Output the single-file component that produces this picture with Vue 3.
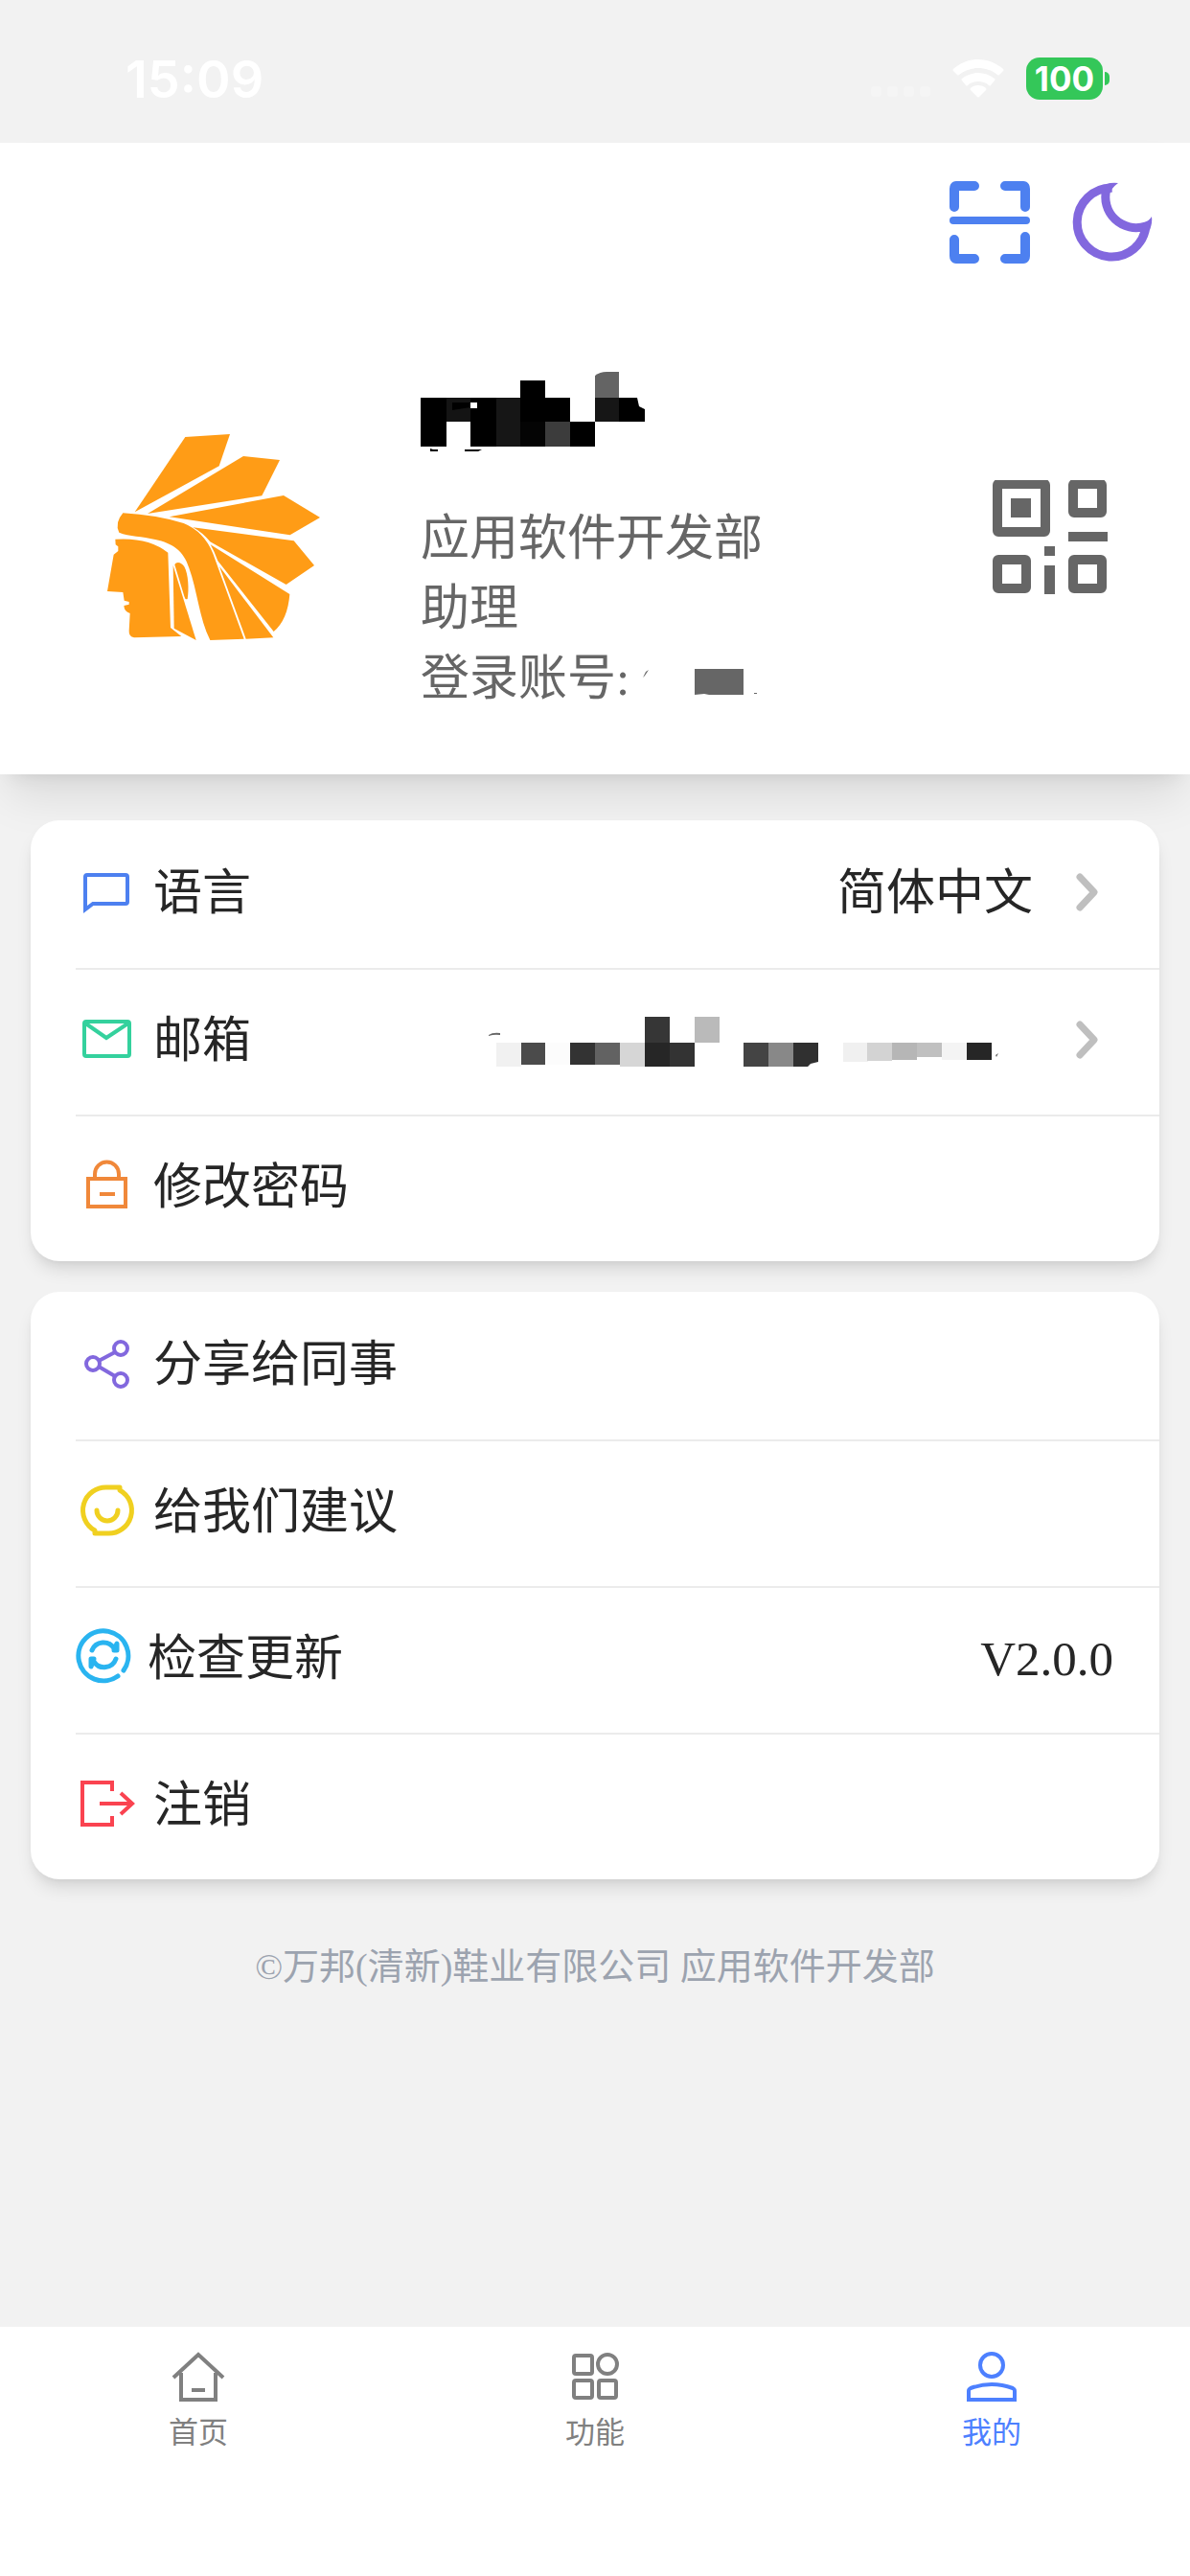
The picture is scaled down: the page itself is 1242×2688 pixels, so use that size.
<template>
  <div class="page">
    <div class="status-bar">
      <span class="time">{{ time }}</span>
      <div class="status-icons">
        <svg class="signal" viewBox="0 0 62 12" aria-hidden="true">
          <rect v-for="n in 4" :key="n" :x="(n - 1) * 17" y="0" width="11" height="11" rx="4" />
        </svg>
        <svg class="wifi" viewBox="0 0 54 40" aria-hidden="true">
          <path d="M27 0C37 0 46 4 53 10q1 1 0 2l-4 4q-1 1-2 0C41 11 34 9 27 9S13 11 7 16q-1 1-2 0l-4-4q-1-1 0-2C8 4 17 0 27 0Z" />
          <path d="M27 14c6 0 12 2 17 6q1 1 0 2l-4 5q-1 1-2 0c-3-3-7-4-11-4s-8 1-11 4q-1 1-2 0l-4-5q-1-1 0-2c5-4 11-6 17-6Z" />
          <path d="M27 27c3 0 6 1 8 3q1 1 0 2l-7 7q-1 1-2 0l-7-7q-1-1 0-2c2-2 5-3 8-3Z" />
        </svg>
        <div class="battery">
          <span class="battery-level">100</span>
          <span class="battery-cap"></span>
        </div>
      </div>
    </div>

    <header class="header">
      <div class="toolbar">
        <button class="icon-button" aria-label="扫一扫">
          <svg class="scan" viewBox="0 0 86 86">
            <path d="M27 5H8Q6 5 6 8V27M59 5H78Q80 5 80 8V27M6 61V78Q6 81 8 81H27M80 58V78Q80 81 78 81H59" />
            <path class="scan-line" d="M5 41H81" />
          </svg>
        </button>
        <button class="icon-button" aria-label="深色模式">
          <svg class="moon" viewBox="0 0 84 86">
            <path d="M41 7A36 36 0 1 0 77 47A32 32 0 0 1 36 8Z" />
            <path class="moon-tips" d="M36 3Q42 1 48 2Q41 7 38 15L33 12ZM74 44Q80 42 83 37Q84 43 81 51L73 54Z" />
          </svg>
        </button>
      </div>

      <div class="profile">
        <svg class="avatar" viewBox="0 16 840 840" role="img" aria-label="头像">
          <path d="M340 106L480 97L446 197L182 341Z" />
          <path d="M522 166L636 178L580 290L222 346Z" />
          <path d="M290 356L648 289L762 358L668 413Z" />
          <path d="M364 389L680 431L744 508L656 568L418 434Q393 404 364 389Z" />
          <path d="M419 443L667 598Q661 678 617 715L442 494Q432 466 419 443Z" />
          <path d="M447 511L616 734L530 738Z" />
          <path d="M145 344Q250 350 335 376Q399 402 427 471L524 738L418 742C384 674 377 583 352 516C335 462 300 438 246 427C205 416 165 418 133 405Q118 375 145 344Z" />
          <path d="M121 426Q225 419 286 468L294 703L328 730L180 734Q163 731 164 713L167 658Q149 653 148 634L164 630V622L149 618L145 592L96 589L116 474L130 463V449L122 443Z" />
          <path d="M302 508L374 742L305 705Z" />
          <path d="M307 506C312 494 329 498 337 512C350 536 352 584 347 613Q340 617 337 605Z" />
        </svg>

        <div class="profile-info">
          <svg class="masked-name" viewBox="0 0 240 85" aria-hidden="true">
            <path fill="#646464" d="M182 5Q187 1 194 1H207V28H182Z" />
            <rect v-for="(c, i) in nameCells" :key="i" :x="c[0]" :y="c[1]" :width="c[2]" :height="c[3]" :fill="c[4]" />
            <path fill="#000" d="M207 28H226L228 37L234 40V53H207ZM10 81L13 82H18V84H10ZM46 82H64L60 84H46Z" />
            <path fill="#000" d="M33 33H52V38L33 41Z" />
            <path fill="#fff" d="M52 33H59V39H52Z" />
          </svg>
          <p>{{ user.department }}</p>
          <p>{{ user.position }}</p>
          <p class="account">
            登录账号:
            <svg class="masked-account" viewBox="0 0 122 51" aria-hidden="true">
              <path d="M55 15H106V42H70L65 41L55 42ZM1 24L4 18L7 16L3 22ZM117 40H120V41H117Z" />
            </svg>
          </p>
        </div>

        <button class="icon-button" aria-label="我的二维码">
          <svg class="qr" viewBox="0 1 120 130">
            <rect x="5" y="5" width="50" height="50" rx="1" />
            <rect x="84" y="5" width="30" height="30" rx="1" />
            <rect x="5" y="84" width="30" height="30" rx="1" />
            <rect x="84" y="84" width="30" height="30" rx="1" />
            <path d="M19 20H40V40H19ZM79 55H120V65H79ZM54 70H65V80H54ZM54 90H65V120H54Z" />
          </svg>
        </button>
      </div>
    </header>

    <main class="content">
      <ul v-for="(group, g) in groups" :key="g" class="card">
        <li v-for="item in group" :key="item.key" class="row">
          <button class="row-button">
            <svg class="row-icon" :class="item.key" viewBox="0 0 64 64" aria-hidden="true">
              <path v-for="(d, i) in item.paths" :key="i" :d="d" />
            </svg>
            <span class="row-label">{{ item.label }}</span>
            <svg v-if="item.masked" class="masked-email" viewBox="0 0 568 54" aria-hidden="true">
              <rect v-for="(c, i) in emailCells" :key="i" :x="c[0]" y="29" width="26" :height="c[1]" :fill="c[2]" />
              <path fill="#363636" d="M163 2H189V29H163Z" />
              <path fill="#bababa" d="M215 2H241V29H215Z" />
              <path fill="#303030" d="M318 29H344V49L336 51L333 54H318Z" />
              <path fill="#666" d="M0 21Q4 18 12 19V21Q6 20 0 22ZM529 42L532 40L530 44Z" />
            </svg>
            <span v-else-if="item.value" class="row-value">{{ item.value }}</span>
            <svg v-if="item.arrow" class="arrow" viewBox="0 0 68 51" aria-hidden="true">
              <path d="M33 8L48 24L33 40" />
            </svg>
          </button>
        </li>
      </ul>
      <p class="copyright">©万邦(清新)鞋业有限公司 应用软件开发部</p>
    </main>

    <nav class="tab-bar">
      <a
        v-for="tab in tabs"
        :key="tab.key"
        :href="'#' + tab.key"
        class="tab"
        :class="{ active: tab.key === activeTab }"
        @click.prevent="activeTab = tab.key"
      >
        <svg class="tab-icon" viewBox="0 0 64 64" aria-hidden="true">
          <path v-for="(d, i) in tab.paths" :key="i" :d="d" />
        </svg>
        <span>{{ tab.label }}</span>
      </a>
    </nav>
  </div>
</template>

<script setup>
import { ref } from 'vue'

const time = '15:09'
const activeTab = ref('mine')

const user = {
  department: '应用软件开发部',
  position: '助理'
}

// mosaic over the user name: x, y, width, height, fill
const nameCells = [
  [0, 28, 27, 51, '#000'],
  [27, 28, 25, 25, '#141414'],
  [52, 28, 27, 51, '#000'],
  [79, 28, 25, 51, '#161616'],
  [104, 10, 26, 43, '#000'],
  [104, 53, 26, 26, '#040404'],
  [130, 28, 26, 25, '#000'],
  [130, 53, 26, 26, '#3c3c3c'],
  [156, 53, 26, 26, '#000'],
  [182, 28, 25, 25, '#161616']
]

// mosaic over the e-mail address: x, height, fill
const emailCells = [
  [8, 25, '#f1f1f1'],
  [34, 23, '#4b4b4b'],
  [59, 23, '#fcfcfc'],
  [85, 23, '#333'],
  [111, 23, '#626262'],
  [137, 25, '#d6d6d6'],
  [163, 25, '#262626'],
  [189, 25, '#333'],
  [266, 25, '#444'],
  [292, 25, '#888'],
  [370, 20, '#f0f0f0'],
  [395, 19, '#d3d3d3'],
  [421, 18, '#b6b6b6'],
  [447, 15, '#c0c0c0'],
  [473, 18, '#f4f4f4'],
  [499, 18, '#262626']
]

const groups = [
  [
    {
      key: 'language',
      label: '语言',
      value: '简体中文',
      arrow: true,
      paths: ['M10 49V15Q10 13 12 13H52Q54 13 54 15V41Q54 43 52 43H18Z']
    },
    {
      key: 'email',
      label: '邮箱',
      masked: true,
      arrow: true,
      paths: [
        'M11 12H54Q56 12 56 14V46Q56 48 54 48H11Q9 48 9 46V14Q9 12 11 12Z',
        'M9 13L32 29L56 13'
      ]
    },
    {
      key: 'password',
      label: '修改密码',
      paths: ['M13 23H52V52H13Z', 'M20 23V18A12 12 0 0 1 45 18V23', 'M25 39H41']
    }
  ],
  [
    {
      key: 'share',
      label: '分享给同事',
      paths: [
        'M11 31A7 7 0 1 0 25 31A7 7 0 1 0 11 31Z',
        'M40 15A7 7 0 1 0 54 15A7 7 0 1 0 40 15Z',
        'M40 48A7 7 0 1 0 54 48A7 7 0 1 0 40 48Z',
        'M24 28L41 19M24 34L41 44'
      ]
    },
    {
      key: 'advice',
      label: '给我们建议',
      paths: [
        'M33 6H46V9A24 24 0 0 1 33 54H20V51A24 24 0 0 1 33 6Z',
        'M22 30A11 11 0 0 0 44 30'
      ]
    },
    {
      key: 'update',
      label: '检查更新',
      value: 'V2.0.0',
      paths: [
        'M50 44A26 26 0 1 0 44 50',
        'M17 23A13 13 0 0 1 40 21',
        'M43 16V23H40Z',
        'M42 32A13 13 0 0 1 19 35',
        'M16 40V32H19Z'
      ]
    },
    {
      key: 'logout',
      label: '注销',
      paths: ['M38 17V8H7V52H38V43', 'M25 30H59', 'M47 19L59 30L47 41']
    }
  ]
]

const tabs = [
  {
    key: 'home',
    label: '首页',
    paths: ['M6 33L32 9L58 33', 'M14 28V56H50V28', 'M25 46H39']
  },
  {
    key: 'features',
    label: '功能',
    paths: [
      'M12 10H27Q29 10 29 12V27Q29 29 27 29H12Q10 29 10 27V12Q10 10 12 10Z',
      'M35 19A10 10 0 1 0 55 19A10 10 0 1 0 35 19Z',
      'M12 36H27Q29 36 29 38V52Q29 54 27 54H12Q10 54 10 52V38Q10 36 12 36Z',
      'M38 36H52Q54 36 54 38V52Q54 54 52 54H38Q36 54 36 52V38Q36 36 38 36Z'
    ]
  },
  {
    key: 'mine',
    label: '我的',
    paths: [
      'M20 20A12 12 0 1 0 44 20A12 12 0 1 0 20 20Z',
      'M8 56V47Q8 45 10 44Q32 36 54 44Q56 45 56 47V56Z'
    ]
  }
]
</script>

<style>
body {
  background: #f2f2f2;
}
</style>

<style scoped>
.page {
  display: flex;
  flex-direction: column;
  min-height: 100vh;
  background: #f2f2f2;
  color: #262626;
  font-family: "Liberation Serif", "Noto Sans CJK SC", serif;
  font-size: 51px;
  line-height: 73px;
}

button {
  margin: 0;
  padding: 0;
  border: 0;
  background: none;
  color: inherit;
  font: inherit;
  cursor: pointer;
}

svg {
  display: block;
  flex: none;
}

p {
  margin: 0;
}

/* status bar */
.status-bar {
  display: flex;
  align-items: center;
  justify-content: space-between;
  box-sizing: border-box;
  height: 149px;
  padding: 15px 84px 0 131px;
  color: #fff;
  font-family: Inter, sans-serif;
}

.time {
  font-size: 54px;
  font-weight: 600;
}

.status-icons {
  display: flex;
  align-items: center;
  gap: 23px;
}

.signal {
  width: 62px;
  height: 12px;
  margin-top: 28px;
  fill: #f5f5f5;
}

.wifi {
  width: 54px;
  height: 40px;
  fill: #fff;
}

.battery {
  display: flex;
  align-items: center;
  gap: 2px;
}

.battery-level {
  width: 80px;
  border-radius: 14px;
  background: #34c759;
  font-size: 35px;
  font-weight: 700;
  line-height: 44px;
  text-align: center;
}

.battery-cap {
  width: 5px;
  height: 14px;
  border-radius: 0 5px 5px 0;
  background: #34c759;
}

/* header */
.header {
  padding-bottom: 63px;
  background: #fff;
  box-shadow: 0 30px 45px -9px rgba(0, 0, 0, 0.1), 0 12px 18px -12px rgba(0, 0, 0, 0.1);
}

.toolbar {
  display: flex;
  justify-content: flex-end;
  gap: 43px;
  padding: 40px 39px 0;
}

.scan {
  width: 86px;
  height: 86px;
  fill: none;
  stroke: #4d80f0;
  stroke-width: 10;
  stroke-linecap: round;
}

.scan-line {
  stroke-width: 8;
}

.moon {
  width: 84px;
  height: 86px;
  fill: none;
  stroke: #8268de;
  stroke-width: 9;
}

.moon-tips {
  fill: #8268de;
  stroke: none;
}

.profile {
  display: flex;
  align-items: center;
  padding: 112px 86px 0 80px;
}

.avatar {
  width: 280px;
  height: 280px;
  fill: #ff9c16;
}

.profile-info {
  flex: 1;
  margin-left: 79px;
  color: #666;
}

.masked-name {
  width: 240px;
  height: 85px;
  margin-bottom: 54px;
}

.account {
  display: flex;
  align-items: center;
  gap: 13px;
}

.masked-account {
  width: 122px;
  height: 51px;
  fill: #666;
}

.qr {
  width: 120px;
  height: 130px;
  fill: #666;
}

.qr rect {
  fill: none;
  stroke: #666;
  stroke-width: 10;
}

/* list cards */
.content {
  flex: 1;
  padding: 48px 32px 0;
}

.card {
  margin: 0 0 32px;
  padding: 1px 0 0 47px;
  border-radius: 30px;
  background: #fff;
  box-shadow: 0 12px 18px -3px rgba(0, 0, 0, 0.1), 0 6px 12px -6px rgba(0, 0, 0, 0.1);
  list-style: none;
}

.row {
  box-sizing: border-box;
  height: 153px;
}

.row + .row {
  border-top: 2px solid #ebebeb;
}

.row-button {
  display: flex;
  align-items: center;
  width: 100%;
  height: 100%;
  padding: 0 48px 3px 0;
  text-align: left;
}

.row-icon {
  width: 64px;
  height: 64px;
  margin-right: 17px;
  fill: none;
  stroke: currentColor;
  stroke-width: 4;
}

.row-label {
  flex: 1;
}

.language {
  color: #4d80f0;
}

.email {
  color: #34d19d;
}

.password {
  color: #f0883a;
}

.share {
  color: #8268de;
}

.advice {
  color: #f0d020;
  stroke-width: 5;
  stroke-linecap: round;
  stroke-linejoin: round;
}

.update {
  margin-right: 11px;
  color: #2ab4f0;
  stroke-width: 5;
  stroke-linecap: round;
  stroke-linejoin: round;
}

.logout {
  color: #fa4350;
}

.masked-email {
  width: 568px;
  height: 54px;
}

.arrow {
  width: 68px;
  height: 51px;
  margin-left: 16px;
  fill: none;
  stroke: #bfbfbf;
  stroke-width: 7;
  stroke-linecap: round;
  stroke-linejoin: round;
}

.copyright {
  padding-top: 32px;
  color: #9ca3af;
  font-size: 38px;
  line-height: 54px;
  text-align: center;
}

/* bottom tabs */
.tab-bar {
  display: flex;
  padding: 20px 0 131px;
  background: #fff;
}

.tab {
  display: flex;
  flex: 1;
  flex-direction: column;
  align-items: center;
  gap: 9px;
  color: #808080;
  font-size: 31px;
  line-height: 36px;
  text-decoration: none;
}

.tab.active {
  color: #4d80ff;
}

.tab-icon {
  width: 64px;
  height: 64px;
  fill: none;
  stroke: currentColor;
  stroke-width: 4;
}
</style>
